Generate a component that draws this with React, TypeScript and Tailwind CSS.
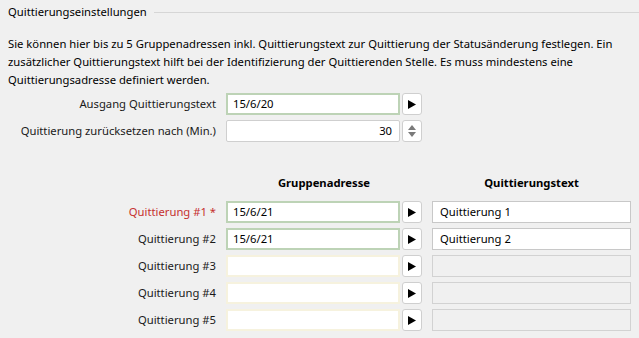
const rows = [
  { label: "Quittierung #1 *", required: true, address: "15/6/21", text: "Quittierung 1" },
  { label: "Quittierung #2", required: false, address: "15/6/21", text: "Quittierung 2" },
  { label: "Quittierung #3", required: false, address: "", text: null },
  { label: "Quittierung #4", required: false, address: "", text: null },
  { label: "Quittierung #5", required: false, address: "", text: null },
];

function PlayButton() {
  return (
    <div className="w-[20px] h-[22px] bg-white border border-[#cfcfcf] rounded-[3px] flex items-center justify-center">
      <svg width="8" height="9" viewBox="0 0 8 9">
        <path d="M0 0 L8 4.5 L0 9 Z" fill="#000" />
      </svg>
    </div>
  );
}

function SpinButton() {
  return (
    <div className="w-[20px] h-[22px] bg-white border border-[#cfcfcf] rounded-[3px] flex flex-col items-center justify-center gap-[2px]">
      <svg width="8" height="5" viewBox="0 0 8 5">
        <path d="M0 5 L4 0 L8 5 Z" fill="#7a7a7a" />
      </svg>
      <svg width="8" height="5" viewBox="0 0 8 5">
        <path d="M0 0 L4 5 L8 0 Z" fill="#7a7a7a" />
      </svg>
    </div>
  );
}

function AddressInput({ value, filled }: { value: string; filled: boolean }) {
  return (
    <div
      className={`h-[22px] bg-white border-2 flex items-center px-[5px] ${
        filled ? "border-[#bdd3b6]" : "border-[#f6f2de]"
      }`}
    >
      {value}
    </div>
  );
}

function Label({ children, red }: React.PropsWithChildren<{ red?: boolean }>) {
  return (
    <div className={`text-right whitespace-nowrap ${red ? "text-[#c62f2f]" : "text-[#1a1a1a]"}`}>
      {children}
    </div>
  );
}

export default function App() {
  return (
    <div
      className="w-[639px] h-[338px] overflow-hidden bg-[#f0f0f0] text-[11.25px] text-black"
      style={{ fontFamily: '"Noto Sans", sans-serif' }}
    >
      <div className="flex items-center pl-[8px] pt-[4px] h-[20px]">
        <span className="leading-[16px]">Quittierungseinstellungen</span>
        <div className="flex-1 h-px bg-[#d6d6d6] ml-[7px]" />
      </div>

      <p className="px-[8px] mt-[15px] leading-[18px] whitespace-nowrap">
        Sie können hier bis zu 5 Gruppenadressen inkl. Quittierungstext zur Quittierung der Statusänderung festlegen. Ein
        <br />
        zusätzlicher Quittierungstext hilft bei der Identifizierung der Quittierenden Stelle. Es muss mindestens eine
        <br />
        Quittierungsadresse definiert werden.
      </p>

      <div className="flex items-center h-[22px] mt-[4px]">
        <div className="w-[216px]">
          <Label>Ausgang Quittierungstext</Label>
        </div>
        <div className="ml-[10px] w-[174px]">
          <AddressInput value="15/6/20" filled />
        </div>
        <div className="ml-[2px]">
          <PlayButton />
        </div>
      </div>

      <div className="flex items-center h-[22px] mt-[5px]">
        <div className="w-[216px]">
          <Label>Quittierung zurücksetzen nach (Min.)</Label>
        </div>
        <div className="ml-[10px] w-[174px] h-[22px] bg-white border border-[#cfcfcf] rounded-[2px] flex items-center justify-end pr-[7px]">
          30
        </div>
        <div className="ml-[2px]">
          <SpinButton />
        </div>
      </div>

      <div className="flex mt-[32px] h-[18px] items-center font-bold">
        <div className="w-[226px]" />
        <div className="w-[196px] text-center">Gruppenadresse</div>
        <div className="w-[10px]" />
        <div className="w-[199px] text-center">Quittierungstext</div>
      </div>

      <div className="flex flex-col gap-[5px] mt-[9px]">
        {rows.map((r) => (
          <div key={r.label} className="flex items-center h-[22px]">
            <div className="w-[216px]">
              <Label red={r.required}>{r.label}</Label>
            </div>
            <div className="ml-[10px] w-[174px]">
              <AddressInput value={r.address} filled={r.address !== ""} />
            </div>
            <div className="ml-[2px]">
              <PlayButton />
            </div>
            <div
              className={`ml-[10px] w-[199px] h-[22px] border flex items-center px-[7px] ${
                r.text ? "bg-white border-[#c8c8c8]" : "bg-[#f0f0f0] border-[#d2d2d2]"
              }`}
            >
              {r.text}
            </div>
          </div>
        ))}
      </div>
    </div>
  );
}
